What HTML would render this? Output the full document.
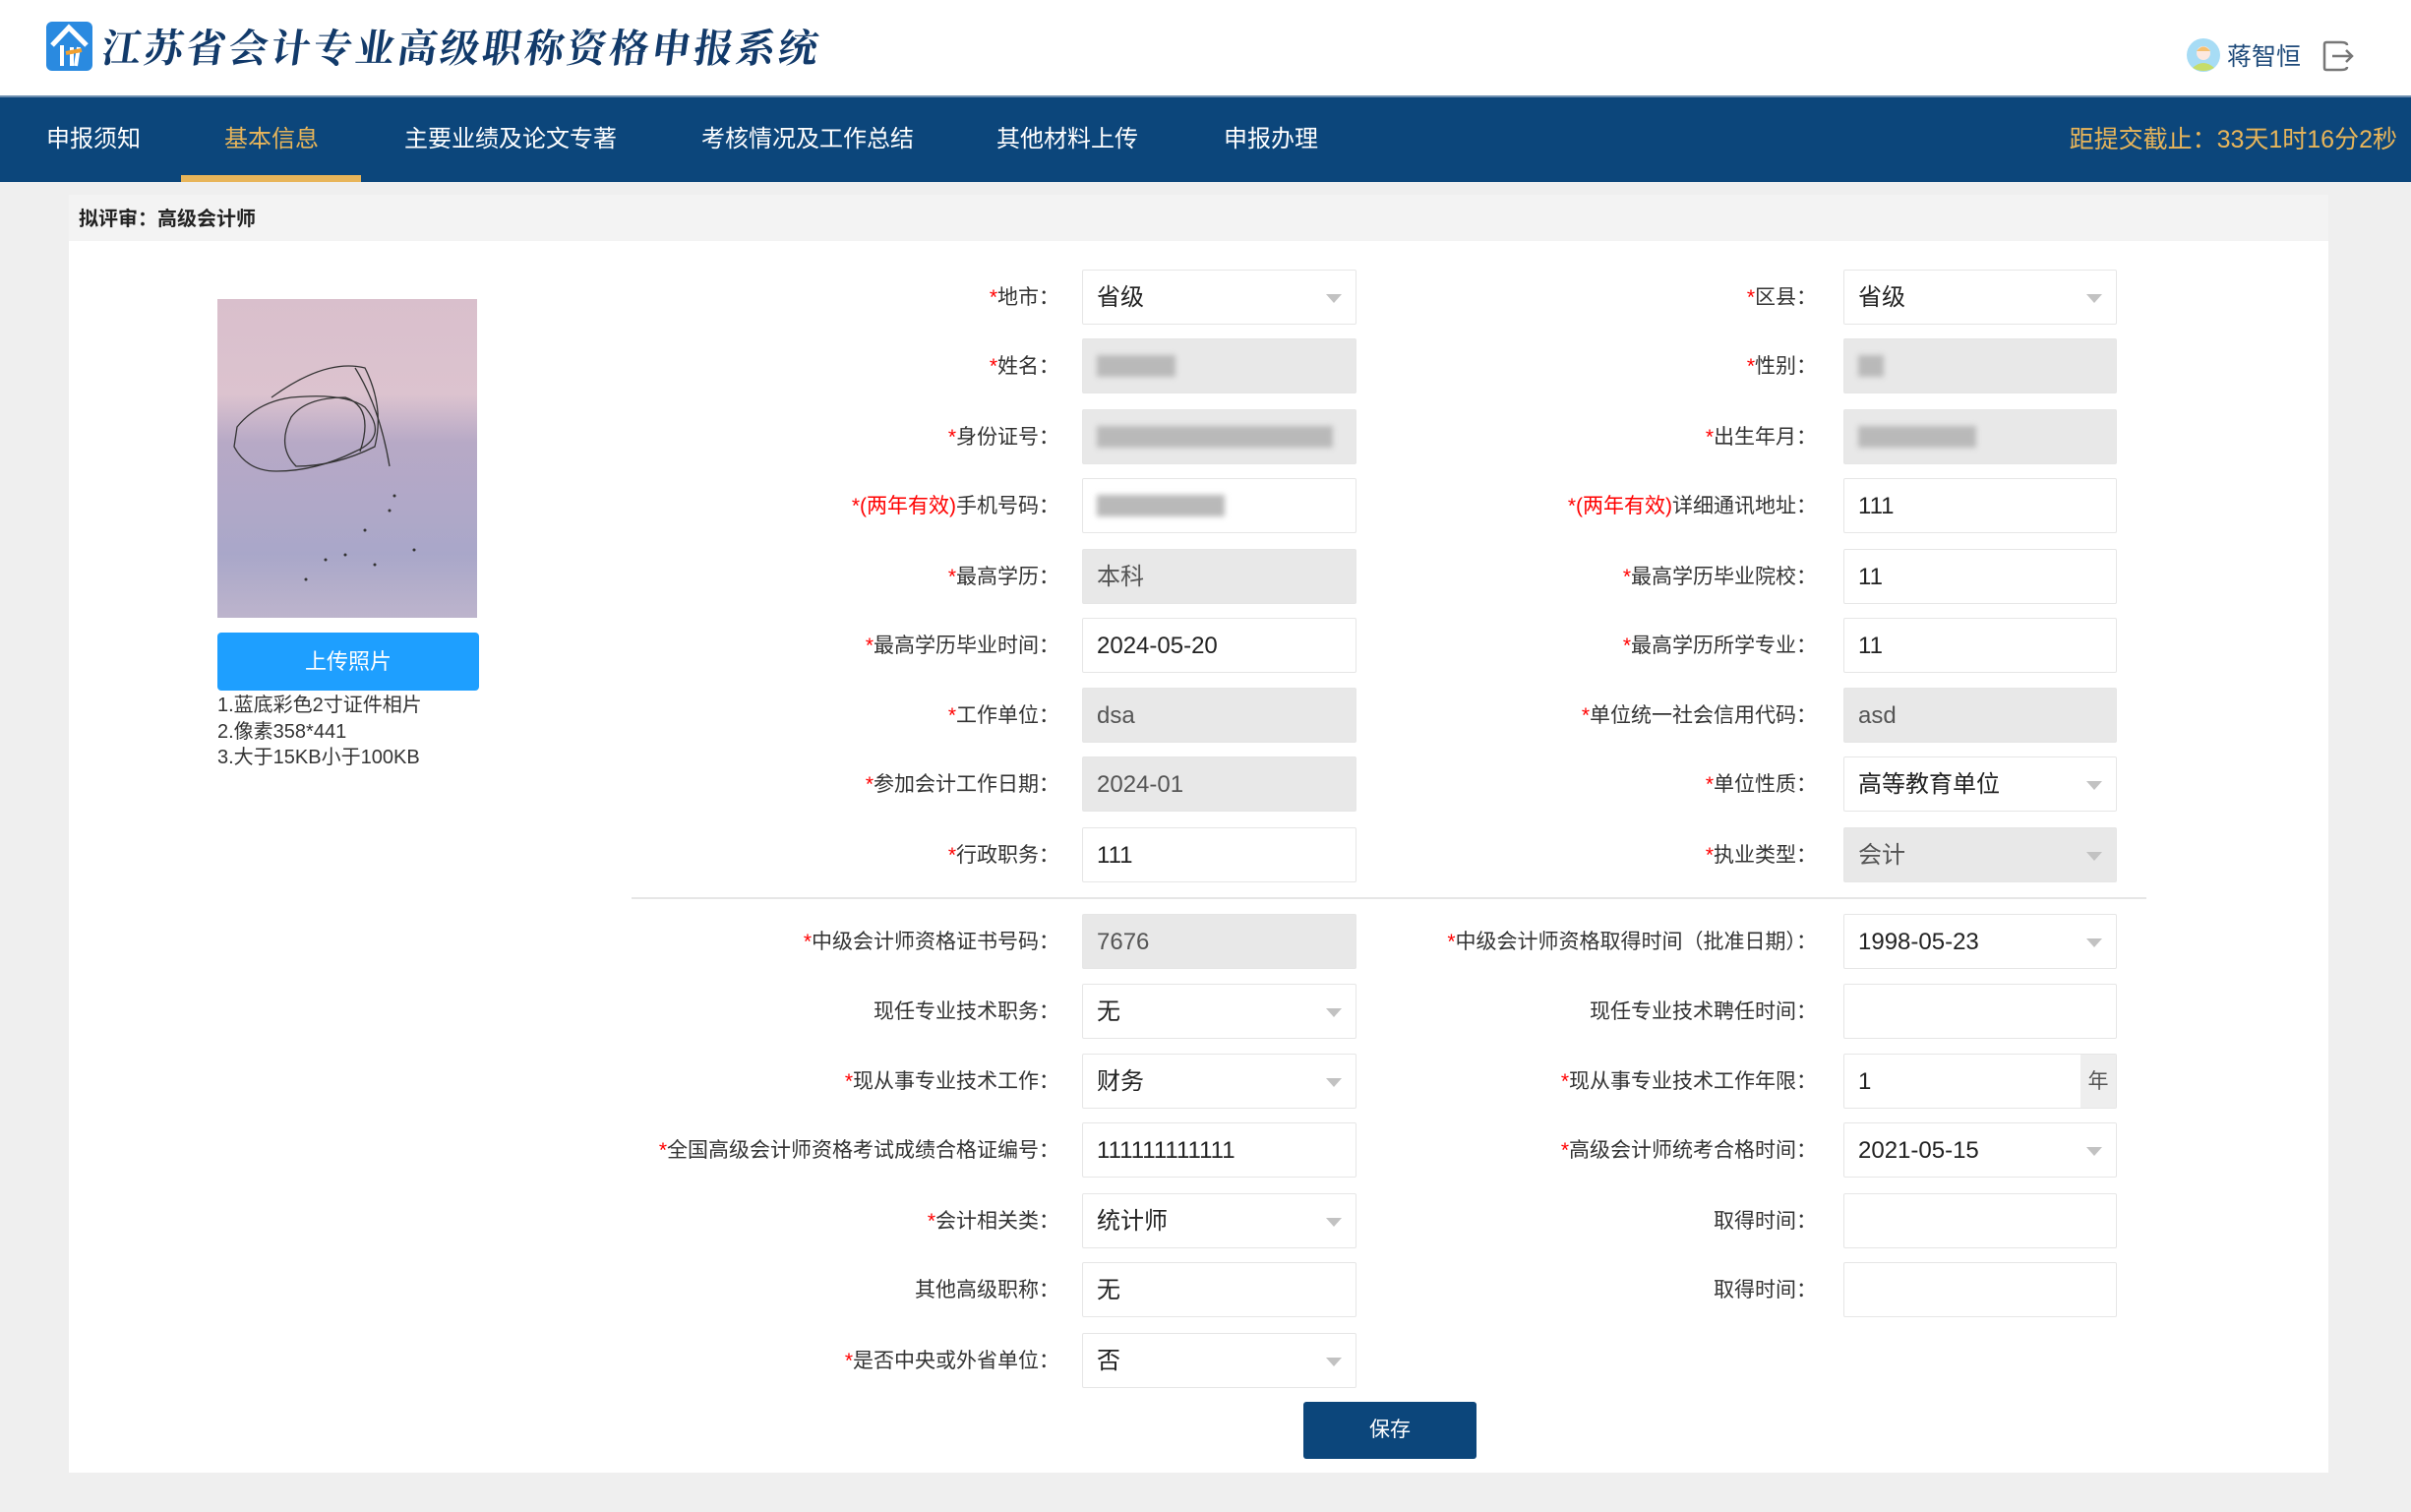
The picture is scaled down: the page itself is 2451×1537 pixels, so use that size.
<!DOCTYPE html>
<html><head><meta charset="utf-8"><style>
*{margin:0;padding:0;box-sizing:border-box}
body{width:2451px;height:1537px;background:#efefef;font-family:"Liberation Sans","Noto Sans CJK SC",sans-serif;position:relative;overflow:hidden;color:#333}
.a{position:absolute}
#hdr{left:0;top:0;width:2451px;height:97px;background:#fff}
#nav{left:0;top:97px;width:2451px;height:88px;background:#0c467b;border-top:2px solid #6d8fb0}
.ni{position:absolute;top:0;height:86px;line-height:86px;font-size:24px;color:#fff}
#panel{left:70px;top:198px;width:2297px;height:1299px;background:#fff}
#ph{left:70px;top:198px;width:2297px;height:47px;background:#f3f3f3;font-size:20px;font-weight:bold;line-height:50px;padding-left:10px;color:#222}
.lb{position:absolute;font-size:21px;color:#333;text-align:right;white-space:nowrap;height:56px;line-height:58px}
.lb i{font-style:normal;color:#f00}
.in{position:absolute;height:56px;border:1px solid #e6e6e6;font-size:24px;line-height:56px;padding-left:14px;color:#222;background:#fff;border-radius:2px}
.g{background:#e8e8e8;color:#555}
.sel:after{content:"";position:absolute;right:14px;top:24px;border-left:8px solid transparent;border-right:8px solid transparent;border-top:9px solid #c2c2c2}
.blur{position:absolute;top:16px;height:22px;background:#b9b9b9;filter:blur(3px)}
</style></head><body>
<div id="hdr" class="a"></div>
<svg class="a" style="left:47px;top:22px" width="47" height="50" viewBox="0 0 47 50"><rect width="47" height="50" rx="6" fill="#2a8ae0"/><path d="M6 24 L23 6 L41 24" stroke="#fff" stroke-width="5" fill="none"/><path d="M16 24 V45 M26 26 V45 M33 26 L30 45" stroke="#fff" stroke-width="4" fill="none"/><path d="M20 32 L36 29" stroke="#f0a030" stroke-width="4"/></svg>
<div class="a" style="left:104px;top:18px;font-size:40px;color:#123a6a;font-family:'Noto Serif CJK SC',serif;letter-spacing:3px;font-weight:bold;transform:skewX(-8deg)">江苏省会计专业高级职称资格申报系统</div>
<svg class="a" style="left:2223px;top:39px" width="34" height="34" viewBox="0 0 34 34"><circle cx="17" cy="17" r="17" fill="#a7dcf5"/><circle cx="17" cy="15" r="7" fill="#fde8e0"/><path d="M10 13 Q17 4 24 13" fill="#f5c070"/><path d="M6 30 Q17 20 28 30 Q17 36 6 30" fill="#c6dd6a"/></svg>
<div class="a" style="left:2264px;top:38px;font-size:25px;color:#1e4a7a">蒋智恒</div>
<svg class="a" style="left:2360px;top:40px" width="34" height="34" viewBox="0 0 34 34"><path d="M20 3 H5 Q3 3 3 5 V29 Q3 31 5 31 H20" stroke="#777" stroke-width="2.5" fill="none"/><path d="M20 3 Q26 3 26 6 M20 31 Q26 31 26 28" stroke="#777" stroke-width="2.5" fill="none"/><path d="M11 17 H31 M25 11 L31 17 L25 23" stroke="#777" stroke-width="2.5" fill="none"/></svg>
<div id="nav" class="a">
<div class="ni" style="left:47px">申报须知</div>
<div class="ni" style="left:228px;color:#e8b55a">基本信息</div>
<div class="a" style="left:184px;top:79px;width:183px;height:7px;background:#e8b55a"></div>
<div class="ni" style="left:411px">主要业绩及论文专著</div>
<div class="ni" style="left:713px">考核情况及工作总结</div>
<div class="ni" style="left:1013px">其他材料上传</div>
<div class="ni" style="left:1244px">申报办理</div>
<div class="ni" style="right:14px;color:#e8b55a;font-size:25px">距提交截止：33天1时16分2秒</div>
</div>
<div id="panel" class="a"></div>
<div id="ph" class="a">拟评审：高级会计师</div>
<div class="a" style="left:221px;top:304px;width:264px;height:324px;background:linear-gradient(180deg,#d9bfcc 0%,#dcc3cf 30%,#b7a9c6 45%,#b0a8c8 65%,#a9a7c9 80%,#bdb4cc 100%)"></div>
<svg class="a" style="left:221px;top:304px" width="264" height="324" viewBox="0 0 264 324"><g stroke="#333" stroke-width="1.3" fill="none"><path d="M55 100 Q110 60 150 70 Q170 110 160 150 Q120 170 80 170 Q60 150 75 120 Q90 100 130 100 Q160 110 145 155"/><path d="M20 130 Q40 105 75 100 Q130 95 150 110 Q175 140 140 155 Q100 175 60 175 Q30 175 17 150 Z"/><path d="M140 70 Q165 110 175 170"/></g><g fill="#333"><circle cx="180" cy="200" r="1.5"/><circle cx="150" cy="235" r="1.5"/><circle cx="130" cy="260" r="1.5"/><circle cx="110" cy="265" r="1.5"/><circle cx="90" cy="285" r="1.5"/><circle cx="200" cy="255" r="1.5"/><circle cx="160" cy="270" r="1.5"/><circle cx="175" cy="215" r="1.5"/></g></svg>
<div class="a" style="left:221px;top:643px;width:266px;height:59px;background:#1e9fff;border-radius:4px;color:#fff;font-size:22px;text-align:center;line-height:59px">上传照片</div>
<div class="a" style="left:221px;top:704px;font-size:20px;line-height:26.5px;color:#333">1.蓝底彩色2寸证件相片<br>2.像素358*441<br>3.大于15KB小于100KB</div>
<div class="a" style="left:642px;top:912px;width:1540px;height:2px;background:#e6e6e6"></div>

<div class="lb" style="right:1374px;top:274px"><i>*</i>地市：</div><div class="in sel" style="left:1100px;top:274px;width:279px">省级</div>
<div class="lb" style="right:604px;top:274px"><i>*</i>区县：</div><div class="in sel" style="left:1874px;top:274px;width:278px">省级</div>

<div class="lb" style="right:1374px;top:344px"><i>*</i>姓名：</div><div class="in g" style="left:1100px;top:344px;width:279px"><div class="blur" style="left:14px;width:80px"></div></div>
<div class="lb" style="right:604px;top:344px"><i>*</i>性别：</div><div class="in g" style="left:1874px;top:344px;width:278px"><div class="blur" style="left:14px;width:26px"></div></div>

<div class="lb" style="right:1374px;top:416px"><i>*</i>身份证号：</div><div class="in g" style="left:1100px;top:416px;width:279px"><div class="blur" style="left:14px;width:240px"></div></div>
<div class="lb" style="right:604px;top:416px"><i>*</i>出生年月：</div><div class="in g" style="left:1874px;top:416px;width:278px"><div class="blur" style="left:14px;width:120px"></div></div>

<div class="lb" style="right:1374px;top:486px"><i>*(两年有效)</i>手机号码：</div><div class="in" style="left:1100px;top:486px;width:279px"><div class="blur" style="left:14px;width:130px"></div></div>
<div class="lb" style="right:604px;top:486px"><i>*(两年有效)</i>详细通讯地址：</div><div class="in" style="left:1874px;top:486px;width:278px">111</div>

<div class="lb" style="right:1374px;top:558px"><i>*</i>最高学历：</div><div class="in g" style="left:1100px;top:558px;width:279px">本科</div>
<div class="lb" style="right:604px;top:558px"><i>*</i>最高学历毕业院校：</div><div class="in" style="left:1874px;top:558px;width:278px">11</div>

<div class="lb" style="right:1374px;top:628px"><i>*</i>最高学历毕业时间：</div><div class="in" style="left:1100px;top:628px;width:279px">2024-05-20</div>
<div class="lb" style="right:604px;top:628px"><i>*</i>最高学历所学专业：</div><div class="in" style="left:1874px;top:628px;width:278px">11</div>

<div class="lb" style="right:1374px;top:699px"><i>*</i>工作单位：</div><div class="in g" style="left:1100px;top:699px;width:279px">dsa</div>
<div class="lb" style="right:604px;top:699px"><i>*</i>单位统一社会信用代码：</div><div class="in g" style="left:1874px;top:699px;width:278px">asd</div>

<div class="lb" style="right:1374px;top:769px"><i>*</i>参加会计工作日期：</div><div class="in g" style="left:1100px;top:769px;width:279px">2024-01</div>
<div class="lb" style="right:604px;top:769px"><i>*</i>单位性质：</div><div class="in sel" style="left:1874px;top:769px;width:278px">高等教育单位</div>

<div class="lb" style="right:1374px;top:841px"><i>*</i>行政职务：</div><div class="in" style="left:1100px;top:841px;width:279px">111</div>
<div class="lb" style="right:604px;top:841px"><i>*</i>执业类型：</div><div class="in g sel" style="left:1874px;top:841px;width:278px">会计</div>

<div class="lb" style="right:1374px;top:929px"><i>*</i>中级会计师资格证书号码：</div><div class="in g" style="left:1100px;top:929px;width:279px">7676</div>
<div class="lb" style="right:604px;top:929px"><i>*</i>中级会计师资格取得时间（批准日期）：</div><div class="in sel" style="left:1874px;top:929px;width:278px">1998-05-23</div>

<div class="lb" style="right:1374px;top:1000px">现任专业技术职务：</div><div class="in sel" style="left:1100px;top:1000px;width:279px">无</div>
<div class="lb" style="right:604px;top:1000px">现任专业技术聘任时间：</div><div class="in" style="left:1874px;top:1000px;width:278px"></div>

<div class="lb" style="right:1374px;top:1071px"><i>*</i>现从事专业技术工作：</div><div class="in sel" style="left:1100px;top:1071px;width:279px">财务</div>
<div class="lb" style="right:604px;top:1071px"><i>*</i>现从事专业技术工作年限：</div><div class="in" style="left:1874px;top:1071px;width:278px">1<div class="a" style="right:0;top:0;width:36px;height:54px;background:#eee;text-align:center;font-size:21px;color:#555">年</div></div>

<div class="lb" style="right:1374px;top:1141px"><i>*</i>全国高级会计师资格考试成绩合格证编号：</div><div class="in" style="left:1100px;top:1141px;width:279px">111111111111</div>
<div class="lb" style="right:604px;top:1141px"><i>*</i>高级会计师统考合格时间：</div><div class="in sel" style="left:1874px;top:1141px;width:278px">2021-05-15</div>

<div class="lb" style="right:1374px;top:1213px"><i>*</i>会计相关类：</div><div class="in sel" style="left:1100px;top:1213px;width:279px">统计师</div>
<div class="lb" style="right:604px;top:1213px">取得时间：</div><div class="in" style="left:1874px;top:1213px;width:278px"></div>

<div class="lb" style="right:1374px;top:1283px">其他高级职称：</div><div class="in" style="left:1100px;top:1283px;width:279px">无</div>
<div class="lb" style="right:604px;top:1283px">取得时间：</div><div class="in" style="left:1874px;top:1283px;width:278px"></div>

<div class="lb" style="right:1374px;top:1355px"><i>*</i>是否中央或外省单位：</div><div class="in sel" style="left:1100px;top:1355px;width:279px">否</div>

<div class="a" style="left:1325px;top:1425px;width:176px;height:58px;background:#0c467b;border-radius:3px;color:#fff;font-size:21px;text-align:center;line-height:58px">保存</div>
</body></html>
